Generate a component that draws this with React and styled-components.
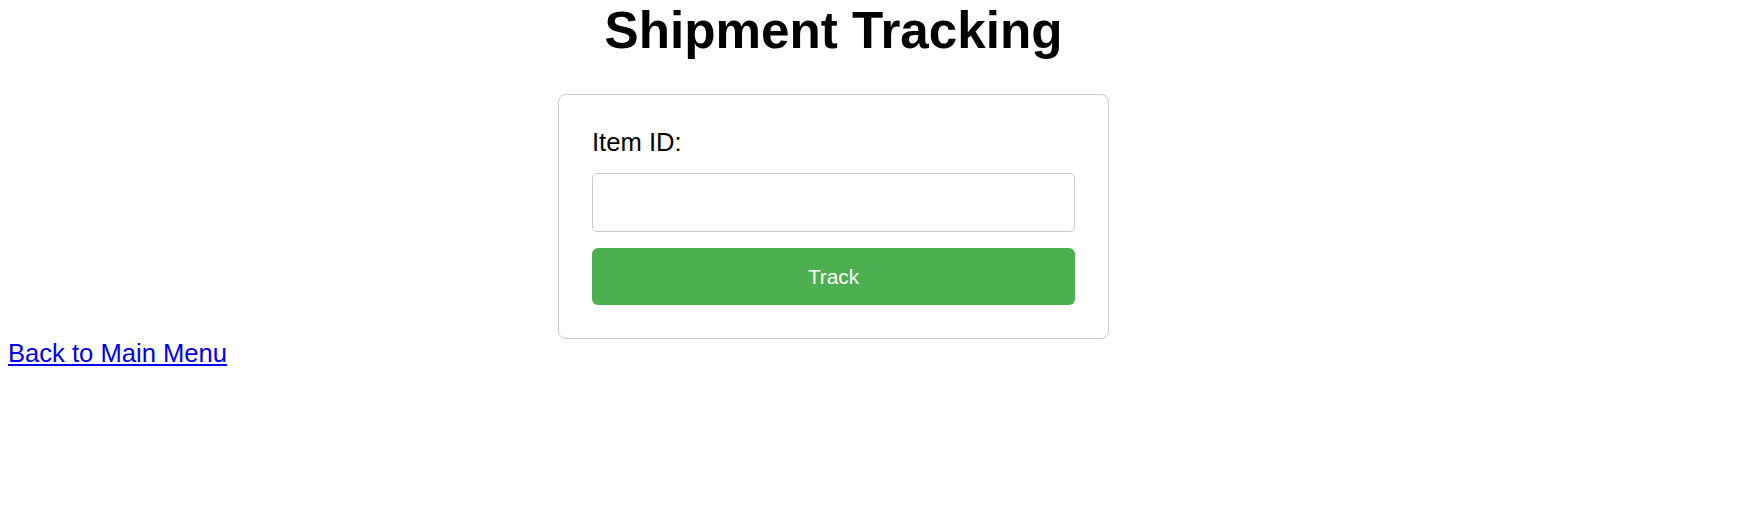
import React, { useState } from "react";
import styled, { createGlobalStyle } from "styled-components";

const GlobalStyle = createGlobalStyle`
  html, body {
    margin: 0;
    padding: 0;
    background: #ffffff;
  }
  body {
    font-family: "Liberation Sans", Arial, sans-serif;
    color: #000000;
  }
`;

const Page = styled.div`
  width: 1651px;
  padding: 2px 0 0 8px;
`;

const Title = styled.h1`
  margin: 0 0 35px 0;
  font-size: 51.2px;
  font-weight: bold;
  line-height: 57px;
  text-align: center;
`;

const Card = styled.form`
  box-sizing: border-box;
  width: 551px;
  margin: 0 auto;
  padding: 33px 33px 33px 33px;
  border: 1px solid #cccccc;
  border-radius: 8px;
  background: #ffffff;
`;

const Label = styled.label`
  display: block;
  font-size: 25.6px;
  line-height: 29px;
  margin-bottom: 16px;
`;

const Input = styled.input`
  display: block;
  box-sizing: border-box;
  width: 100%;
  height: 59px;
  margin: 0 0 16px 0;
  padding: 0 16px;
  border: 1px solid #cccccc;
  border-radius: 5px;
  font-family: inherit;
  font-size: 25.6px;
  outline: none;
`;

const Button = styled.button`
  display: block;
  width: 100%;
  height: 57px;
  border: none;
  border-radius: 6px;
  background-color: #4caf50;
  color: #ffffff;
  font-family: inherit;
  font-size: 20.8px;
  cursor: pointer;
`;

const BackLink = styled.a`
  font-size: 25.6px;
  color: #0000ee;
  text-decoration: underline;
`;

export default function App() {
  const [itemId, setItemId] = useState("");

  return (
    <>
      <GlobalStyle />
      <Page>
        <Title>Shipment Tracking</Title>
        <Card onSubmit={(e) => e.preventDefault()}>
          <Label htmlFor="item_id">Item ID:</Label>
          <Input
            id="item_id"
            value={itemId}
            onChange={(e) => setItemId(e.target.value)}
          />
          <Button type="submit">Track</Button>
        </Card>
        <div>
          <BackLink href="#">Back to Main Menu</BackLink>
        </div>
      </Page>
    </>
  );
}
